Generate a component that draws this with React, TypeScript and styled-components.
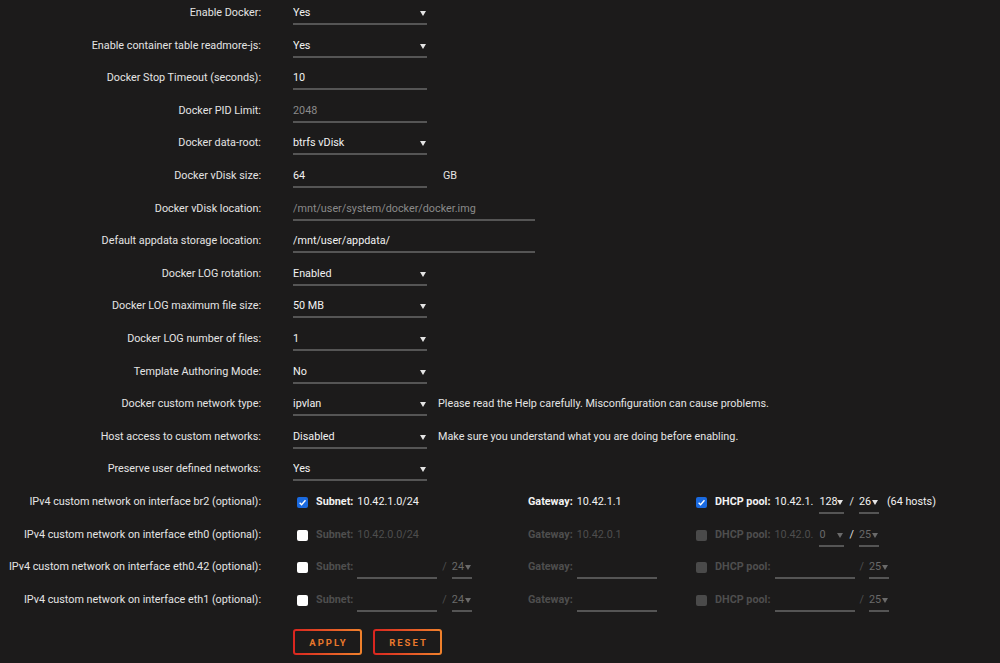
import React, { FC } from "react";
import styled, { createGlobalStyle } from "styled-components";

const GlobalStyle = createGlobalStyle`
  html, body {
    margin: 0;
    padding: 0;
    background: #1c1b1b;
  }
  body {
    font-family: Roboto, "Liberation Sans", sans-serif;
    font-size: 10.8px;
    color: #f2f2f2;
  }
`;

const Page = styled.form`
  padding-top: 3px;
  width: 1000px;
  height: 663px;
  overflow: hidden;
  box-sizing: border-box;
`;

const Row = styled.div`
  display: grid;
  grid-template-columns: 261px 1fr;
  column-gap: 32px;
  height: 32.6px;
  align-items: start;
`;

const Label = styled.label`
  text-align: right;
  line-height: 20px;
  color: #e4e4e4;
  white-space: nowrap;
`;

const Field = styled.div`
  display: flex;
  align-items: flex-start;
  line-height: 20px;
  white-space: nowrap;
`;

const SelectWrap = styled.div<{ $w: number; $dim?: boolean }>`
  position: relative;
  width: ${(p) => p.$w}px;
  height: 20px;
  border-bottom: 2px solid #555;
  color: ${(p) => (p.$dim ? "#6a6a6a" : "#f2f2f2")};
  flex: none;

  &::after {
    content: "";
    position: absolute;
    right: 1px;
    top: 8px;
    border-left: 3px solid transparent;
    border-right: 3px solid transparent;
    border-top: 5px solid ${(p) => (p.$dim ? "#6a6a6a" : "#e4e4e4")};
  }
`;

const NativeSelect = styled.select`
  appearance: none;
  -webkit-appearance: none;
  background: transparent;
  border: 0;
  outline: 0;
  padding: 0;
  margin: 0;
  width: 100%;
  height: 20px;
  line-height: 20px;
  font: inherit;
  color: inherit;
`;

const TextInput = styled.input<{ $w: number; $muted?: boolean }>`
  width: ${(p) => p.$w}px;
  height: 20px;
  box-sizing: content-box;
  padding: 0;
  margin: 0;
  border: 0;
  border-bottom: 2px solid #555;
  background: transparent;
  outline: 0;
  font: inherit;
  line-height: 20px;
  color: ${(p) => (p.$muted ? "#8a8a8a" : "#f2f2f2")};
  flex: none;

  &::placeholder {
    color: #8a8a8a;
  }
`;

const Unit = styled.span`
  margin-left: 16px;
  color: #e4e4e4;
`;

const Help = styled.span`
  margin-left: 11px;
  color: #e4e4e4;
`;

const Group = styled.div<{ $w?: number }>`
  display: flex;
  align-items: flex-start;
  width: ${(p) => (p.$w ? `${p.$w}px` : "auto")};
  flex: none;
`;

const Key = styled.b<{ $dim?: boolean }>`
  font-weight: 700;
  color: ${(p) => (p.$dim ? "#4e4e4e" : "#f2f2f2")};
  margin-right: 4px;
`;

const Val = styled.span<{ $dim?: boolean; $gap?: number }>`
  color: ${(p) => (p.$dim ? "#4e4e4e" : "#f2f2f2")};
  margin-right: ${(p) => p.$gap ?? 0}px;
`;

const Slash = styled.span<{ $dim?: boolean }>`
  color: ${(p) => (p.$dim ? "#4e4e4e" : "#e4e4e4")};
  margin: 0 5px;
`;

const Box = styled.span<{ $state: "on" | "off" | "disabled" }>`
  display: inline-flex;
  align-items: center;
  justify-content: center;
  width: 11px;
  height: 11px;
  margin: 5px 8px 0 4px;
  border-radius: 2px;
  flex: none;
  background: ${(p) =>
    p.$state === "on" ? "#1a6ae0" : p.$state === "off" ? "#ffffff" : "#4a4a4a"};
`;

const Buttons = styled.div`
  display: flex;
  gap: 11px;
  padding-left: 293px;
  margin-top: 7px;
`;

const Button = styled.button`
  width: 69px;
  height: 26px;
  box-sizing: border-box;
  border: 2px solid transparent;
  border-radius: 3px;
  background: linear-gradient(#1c1b1b, #1c1b1b) padding-box,
    linear-gradient(90deg, #d9251f, #f0822c) border-box;
  color: #e8782c;
  font-family: Roboto, "Liberation Sans", sans-serif;
  font-weight: 700;
  font-size: 9.5px;
  letter-spacing: 2px;
  text-transform: uppercase;
  padding: 0 0 0 2px;
  cursor: pointer;
`;

const Check: FC<{ state: "on" | "off" | "disabled" }> = ({ state }) => (
  <Box $state={state}>
    {state === "on" && (
      <svg width="9" height="9" viewBox="0 0 10 10">
        <path d="M1.8 5.2 L4 7.4 L8.3 2.6" fill="none" stroke="#fff" strokeWidth="1.6" />
      </svg>
    )}
  </Box>
);

const Select: FC<{ value: string; w: number; dim?: boolean }> = ({ value, w, dim }) => (
  <SelectWrap $w={w} $dim={dim}>
    <NativeSelect defaultValue={value}>
      <option>{value}</option>
    </NativeSelect>
  </SelectWrap>
);

type Simple = {
  label: string;
  kind: "select" | "text";
  value?: string;
  placeholder?: string;
  width?: number;
  muted?: boolean;
  unit?: string;
  help?: string;
};

const simpleRows: Simple[] = [
  { label: "Enable Docker:", kind: "select", value: "Yes" },
  { label: "Enable container table readmore-js:", kind: "select", value: "Yes" },
  { label: "Docker Stop Timeout (seconds):", kind: "text", value: "10" },
  { label: "Docker PID Limit:", kind: "text", placeholder: "2048" },
  { label: "Docker data-root:", kind: "select", value: "btrfs vDisk" },
  { label: "Docker vDisk size:", kind: "text", value: "64", unit: "GB" },
  {
    label: "Docker vDisk location:",
    kind: "text",
    value: "/mnt/user/system/docker/docker.img",
    width: 242,
    muted: true,
  },
  {
    label: "Default appdata storage location:",
    kind: "text",
    value: "/mnt/user/appdata/",
    width: 242,
  },
  { label: "Docker LOG rotation:", kind: "select", value: "Enabled" },
  { label: "Docker LOG maximum file size:", kind: "select", value: "50 MB" },
  { label: "Docker LOG number of files:", kind: "select", value: "1" },
  { label: "Template Authoring Mode:", kind: "select", value: "No" },
  {
    label: "Docker custom network type:",
    kind: "select",
    value: "ipvlan",
    help: "Please read the Help carefully. Misconfiguration can cause problems.",
  },
  {
    label: "Host access to custom networks:",
    kind: "select",
    value: "Disabled",
    help: "Make sure you understand what you are doing before enabling.",
  },
  { label: "Preserve user defined networks:", kind: "select", value: "Yes" },
];

export default function App() {
  return (
    <>
      <GlobalStyle />
      <Page onSubmit={(e) => e.preventDefault()}>
        {simpleRows.map((r) => (
          <Row key={r.label}>
            <Label>{r.label}</Label>
            <Field>
              {r.kind === "select" ? (
                <Select value={r.value ?? ""} w={r.width ?? 134} />
              ) : (
                <TextInput
                  $w={r.width ?? 134}
                  $muted={r.muted}
                  defaultValue={r.value}
                  placeholder={r.placeholder}
                  readOnly={r.muted}
                />
              )}
              {r.unit && <Unit>{r.unit}</Unit>}
              {r.help && <Help>{r.help}</Help>}
            </Field>
          </Row>
        ))}

        <Row>
          <Label>IPv4 custom network on interface br2 (optional):</Label>
          <Field>
            <Group $w={235}>
              <Check state="on" />
              <Key>Subnet:</Key>
              <Val>10.42.1.0/24</Val>
            </Group>
            <Group $w={164}>
              <Key>Gateway:</Key>
              <Val>10.42.1.1</Val>
            </Group>
            <Group>
              <Check state="on" />
              <Key>DHCP pool:</Key>
              <Val $gap={6}>10.42.1.</Val>
              <Select value="128" w={25} />
              <Slash>/</Slash>
              <Select value="26" w={20} />
              <Val style={{ marginLeft: 8 }}>(64 hosts)</Val>
            </Group>
          </Field>
        </Row>

        <Row>
          <Label>IPv4 custom network on interface eth0 (optional):</Label>
          <Field>
            <Group $w={235}>
              <Check state="off" />
              <Key $dim>Subnet:</Key>
              <Val $dim>10.42.0.0/24</Val>
            </Group>
            <Group $w={164}>
              <Key $dim>Gateway:</Key>
              <Val $dim>10.42.0.1</Val>
            </Group>
            <Group>
              <Check state="disabled" />
              <Key $dim>DHCP pool:</Key>
              <Val $dim $gap={6}>10.42.0.</Val>
              <Select value="0" w={25} dim />
              <Slash>/</Slash>
              <Select value="25" w={20} dim />
            </Group>
          </Field>
        </Row>

        {["eth0.42", "eth1"].map((ifc) => (
          <Row key={ifc}>
            <Label>IPv4 custom network on interface {ifc} (optional):</Label>
            <Field>
              <Group $w={235}>
                <Check state="off" />
                <Key $dim>Subnet:</Key>
                <TextInput $w={80} />
                <Slash $dim>/</Slash>
                <Select value="24" w={20} dim />
              </Group>
              <Group $w={164}>
                <Key $dim>Gateway:</Key>
                <TextInput $w={80} />
              </Group>
              <Group>
                <Check state="disabled" />
                <Key $dim>DHCP pool:</Key>
                <TextInput $w={80} />
                <Slash $dim>/</Slash>
                <Select value="25" w={20} dim />
              </Group>
            </Field>
          </Row>
        ))}

        <Buttons>
          <Button type="submit">Apply</Button>
          <Button type="reset">Reset</Button>
        </Buttons>
      </Page>
    </>
  );
}
